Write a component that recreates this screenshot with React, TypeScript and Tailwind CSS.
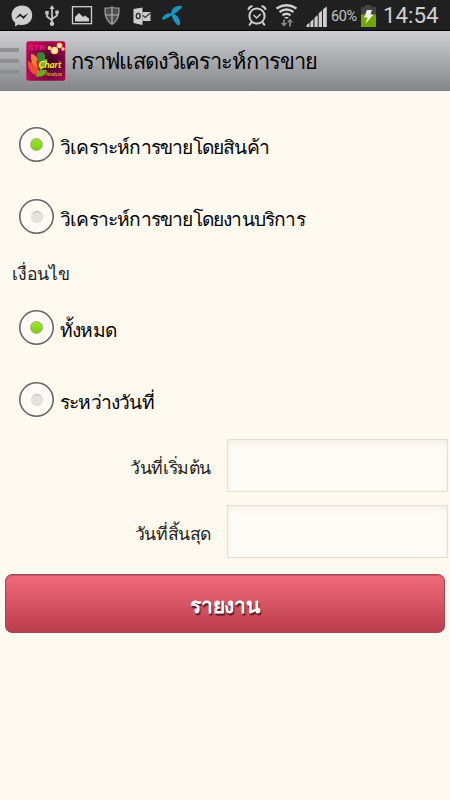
import React, { useState } from 'react';

function StatusBar() {
  return (
    <div className="flex h-[31px] items-center bg-[#202020] pt-px border-b border-black">
      <svg className="h-[30px] w-[300px] shrink-0" viewBox="0 0 300 30">
        {/* messenger */}
        <path d="M22 4.500C16 4.500 11.600 8.700 11.600 14.200c0 3 1.300 5.600 3.500 7.400V25.500l3.200-2c1.200.4 2.400.5 3.700.5 6 0 10.200-4.200 10.200-9.800S28 4.500 22 4.500z" fill="#cfcfcf" />
        <path d="M15 18l5-5.500 3.200 2.800 5.300-3-5 5.700-3.200-2.900z" fill="#202020" />
        {/* usb */}
        <path d="M52 7v16M47 12v3.500l5 4M57 11.500v3L52 18" stroke="#c8c8c8" strokeWidth="1.700" fill="none" />
        <path d="M52 4l2.500 4h-5zM45.300 10h3.400v3.400h-3.400zM55.300 9.500h3.400v3.400h-3.400z" fill="#c8c8c8" />
        <circle cx="52" cy="22.700" r="2.200" fill="#c8c8c8" />
        {/* gallery */}
        <rect x="72.500" y="5.700" width="19" height="17" fill="none" stroke="#cfcfcf" strokeWidth="1.300" />
        <path d="M75 20.500V16l4-4 4 4 2-1.500 4 3v3z" fill="#cfcfcf" />
        {/* shield */}
        <path d="M112 6c2.500 1 4.800 1.300 7 1.200.4 7-1.300 12.800-7 16.300-5.700-3.500-7.400-9.300-7-16.300 2.200.1 4.500-.2 7-1.200z" fill="#4c4c4c" stroke="#9c9c9c" strokeWidth="1.300" />
        <path d="M112 7v16M105.500 14h13" stroke="#b5b5b5" strokeWidth="1.200" />
        {/* outlook */}
        <path d="M133.500 8l9-1.500v17.500l-9-2z" fill="#cdcdcd" />
        <ellipse cx="138.200" cy="15" rx="1.900" ry="2.600" fill="none" stroke="#2b2b2b" strokeWidth="1.400" />
        <path d="M142.500 11h8v9h-8z" fill="#cdcdcd" />
        <path d="M143 14.500l2.300 2 5-4.500" fill="none" stroke="#333" strokeWidth="1.100" />
        {/* carrier logo */}
        <path d="M172 13.500C169.500 9 174.500 4.800 180.500 4.800c1.800.2 1.500 1.500.5 2.600-2.500 2.600-5 4.600-9 6.100z" fill="#1996c0" />
        <path d="M173 12.800c-4.500-1.500-9 .6-10.700 4-.7 1.600.2 2.200 1.700 1.700 3.700-1.200 6.500-2.700 9-5.700z" fill="#1996c0" />
        <path d="M171.200 12.300c5 .8 8.800 4.700 8.900 9.700 0 2.500-1.700 2.900-3 1.700-3.200-3-5.300-7-5.900-11.400z" fill="#1996c0" />
        {/* alarm clock */}
        <g fill="none" stroke="#cfcfcf" strokeWidth="2">
          <circle cx="257" cy="15" r="7.600" />
          <path d="M248.500 9q0-3 4-4M265.500 9q0-3-4-4M251.500 21l-2.300 3.500M262.500 21l2.300 3.500" />
          <path d="M253.500 14l3 3 4.300-4" strokeWidth="1.500" />
        </g>
        {/* wifi */}
        <path d="M276.500 7.500q10-6.500 20 0M279.500 11q7-5 14 0M282.500 14.300q4-3 8 0" fill="none" stroke="#cfcfcf" strokeWidth="2.300" />
        <path d="M284 16h5l-2.500 2.300z" fill="#cfcfcf" />
        <path d="M284 18.500v6M290 25.500v-6" fill="none" stroke="#858585" strokeWidth="1.800" />
        <path d="M280.800 22h6.400l-3.200 3.700zM286.800 21.500h6.400L290 17.500z" fill="#858585" />
      </svg>
      <svg className="ml-1.5 h-[30px] w-[22px] shrink-0" viewBox="306 0 22 30">
        <path d="M306.500 26v-2l3-2.200V26zM310.400 26v-5.300l3-2.700v8zM314.500 26v-9.200l3.200-2.700V26zM318.700 26V12.300l3.300-2.700V26zM323 26V8.300l3.800-2.800V26z" fill="#cfcfcf" />
      </svg>
      <span className="ml-[3px] w-[28px] whitespace-nowrap pt-1 font-[Roboto] text-[14.500px] leading-none tracking-[-0.400px] text-[#c4c4c4]">60%</span>
      <svg className="ml-[2px] h-[30px] w-[15px] shrink-0" viewBox="361 0 15 30">
        <path d="M365 4h6v2h5v8h-15V6h4z" fill="#454545" />
        <path d="M361 13.500h15V26h-15z" fill="#70a800" />
        <path d="M367 9h5l-1.500 4.500h3L365.500 23l2-6.500h-3.500z" fill="#eee" />
      </svg>
      <span className="ml-[7px] whitespace-nowrap font-[Roboto] text-[22.300px] leading-none text-[#cfcfcf]">14:54</span>
    </div>
  );
}

function AppIcon() {
  return (
    <svg className="h-10 w-10 shrink-0" viewBox="0 0 40 40">
      <defs>
        <radialGradient id="iconBg" cx="0.6" cy="0.55" r="0.7">
          <stop offset="0" stopColor="#3c001e" />
          <stop offset="0.5" stopColor="#76063d" />
          <stop offset="1" stopColor="#c60a59" />
        </radialGradient>
      </defs>
      <rect x="0.300" y="0.300" width="39" height="39.400" rx="2.500" fill="url(#iconBg)" />
      <path d="M12 32Q4 24 5 13q8 0 8 16z" fill="#ed8138" />
      <path d="M11 29V12q9-3 8 5 0 5-5 11z" fill="#348536" />
      <path d="M14 27q0-9 7-9 2 6-7 12z" fill="#76b52c" />
      <path d="M12 35Q1 32 2 20q9 3 10 13z" fill="#ef4a31" />
      <path d="M12 30l-2-10q4-1 4 6z" fill="#c02e35" />
      <path d="M10 36q1-9 11-7 0 7-11 7z" fill="#75a51e" />
      <text x="2" y="8.500" fontSize="8" fontWeight="700" fontFamily="Roboto, sans-serif" fill="#f3117a" textLength="17" lengthAdjust="spacingAndGlyphs">STR</text>
      <g fill="#ffd47a">
        <circle cx="23.500" cy="7" r="1.900" />
        <circle cx="28.500" cy="9.500" r="3.800" />
        <circle cx="33.500" cy="4.500" r="2.800" />
        <circle cx="37" cy="8" r="1.800" />
      </g>
      <circle cx="28.500" cy="9.500" r="2" fill="#fff0b8" />
      <circle cx="33.500" cy="4.500" r="1.300" fill="#fff0b8" />
      <text x="12.500" y="27" fontSize="9" fontWeight="700" fontStyle="italic" fontFamily="Lato, sans-serif" fill="#ffee25" textLength="23" lengthAdjust="spacingAndGlyphs">Chart</text>
      <text x="20" y="34.500" fontSize="5" fontWeight="700" fontStyle="italic" fontFamily="Lato, sans-serif" fill="#e8a030" textLength="16" lengthAdjust="spacingAndGlyphs">Analyze</text>
    </svg>
  );
}

interface RadioRowProps {
  label: string;
  checked: boolean;
  onSelect: () => void;
}

function RadioRow({ label, checked, onSelect }: RadioRowProps) {
  return (
    <button type="button" role="radio" aria-checked={checked} onClick={onSelect} className="flex h-[72.500px] w-full items-center pl-[19px] text-left">
      <span className="flex h-[35px] w-[35px] shrink-0 items-center justify-center rounded-full bg-[#fffaf3] shadow-[inset_0_0_0_1.600px_#666]">
        {checked ? (
          <span className="h-[13px] w-[13px] rounded-full border border-[#a2b18a] bg-linear-to-b from-[#9ae52c] to-[#7dcd12]" />
        ) : (
          <span className="h-3 w-3 rounded-full border border-[#dedbd5] border-t-[#b9b6b0] bg-[#e4e2dc]" />
        )}
      </span>
      <span className="ml-[6px] whitespace-nowrap pt-[4px] text-[19.200px] leading-none tracking-[-0.800px] text-black">{label}</span>
    </button>
  );
}

function DateField({ label }: { label: string }) {
  return (
    <label className="flex h-[53px] items-center">
      <span className="w-[211px] whitespace-nowrap pt-1 text-right text-[17.600px] leading-none tracking-[-0.400px] text-[#222]">{label}</span>
      <input className="ml-[16px] h-[53px] w-[221px] border border-[#e3dfd8] bg-[#fffcf5] px-3 shadow-[inset_0_3px_6px_#f3efe7] outline-none" />
    </label>
  );
}

export default function App() {
  const [type, setType] = useState('product');
  const [range, setRange] = useState('all');

  return (
    <div className="h-[800px] w-[450px] overflow-hidden bg-[#fffaf0] font-['Noto_Sans',sans-serif]">
      <StatusBar />
      <header className="flex h-[60px] items-center border-b border-[#7b7d81] bg-linear-to-b from-[#cfcfd2] to-[#85878b]">
        <div className="flex w-[19px] flex-col gap-[7px]">
          <span className="h-[4px] bg-[#929294]" />
          <span className="h-[4px] bg-[#8f9092]" />
          <span className="h-[4px] bg-[#8c8d90]" />
        </div>
        <div className="ml-[7px]">
          <AppIcon />
        </div>
        <h1 className="ml-[5px] whitespace-nowrap pt-px text-[21.800px] leading-none tracking-[-0.900px] text-black">กราฟแสดงวิเคราะห์การขาย</h1>
      </header>
      <main>
        <div className="pt-[17px]">
          <RadioRow label="วิเคราะห์การขายโดยสินค้า" checked={type === 'product'} onSelect={() => setType('product')} />
          <RadioRow label="วิเคราะห์การขายโดยงานบริการ" checked={type === 'service'} onSelect={() => setType('service')} />
        </div>
        <p className="flex h-[38px] items-center whitespace-nowrap pl-[12px] pt-1 text-[17.600px] leading-none tracking-[-0.200px] text-[#222]">เงื่อนไข</p>
        <RadioRow label="ทั้งหมด" checked={range === 'all'} onSelect={() => setRange('all')} />
        <RadioRow label="ระหว่างวันที่" checked={range === 'between'} onSelect={() => setRange('between')} />
        <div className="flex flex-col gap-[13px] pt-[3px]">
          <DateField label="วันที่เริ่มต้น" />
          <DateField label="วันที่สิ้นสุด" />
        </div>
        <button type="button" className="ml-[5px] mt-4 flex h-[59px] w-[440px] items-center justify-center rounded-[7px] border border-[#9d4852] bg-linear-to-b from-[#f16c7c] to-[#bb3c4c] pt-[3px] text-[21px] font-bold leading-none tracking-[-0.300px] text-white shadow-[inset_0_1px_1px_#c95462] text-shadow-[1px_2px_1px_#501820]">
          รายงาน
        </button>
      </main>
    </div>
  );
}
